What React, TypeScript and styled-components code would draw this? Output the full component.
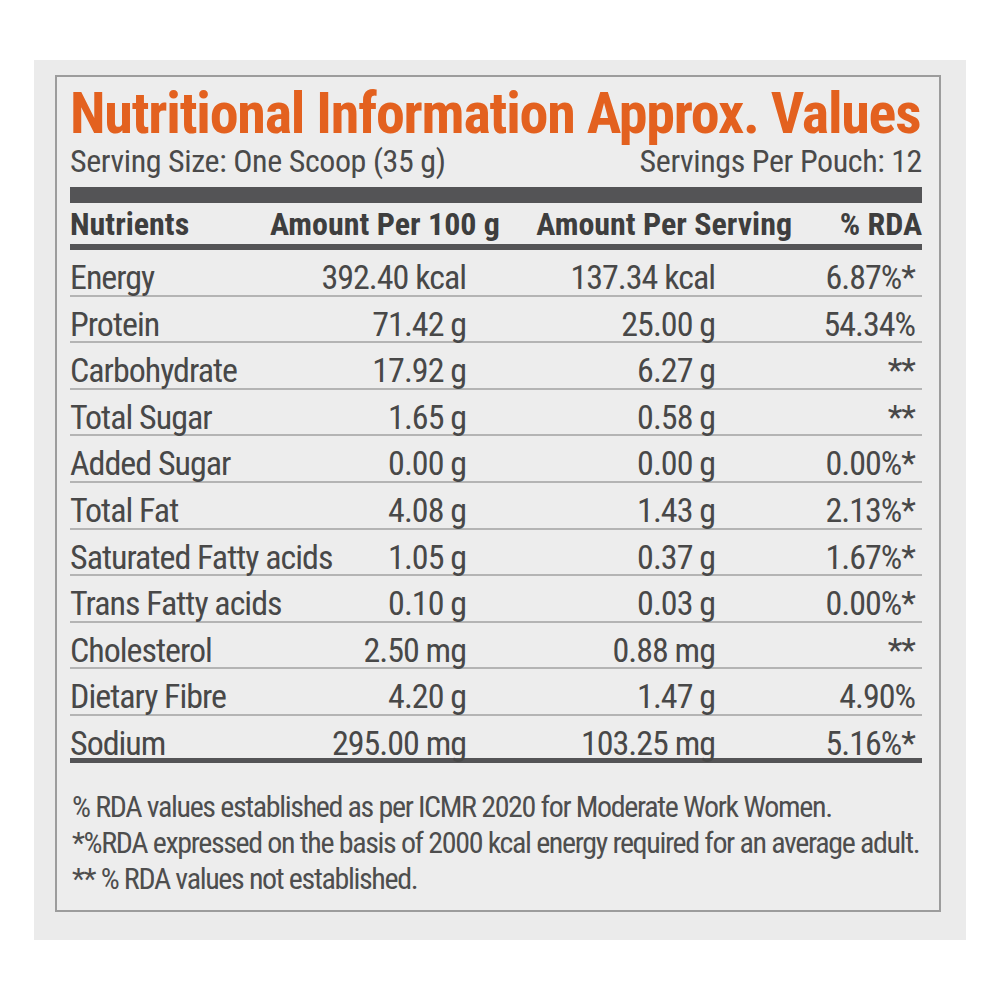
import React from "react";
import styled, { createGlobalStyle } from "styled-components";

const GlobalStyle = createGlobalStyle`
  html, body { margin: 0; padding: 0; background: #ffffff; }
  body { font-family: "Roboto Condensed", Roboto, "Liberation Sans", sans-serif; font-stretch: condensed; }
`;

const Page = styled.div`
  width: 1000px;
  height: 1000px;
  padding-top: 60px;
  padding-left: 34px;
  box-sizing: border-box;
`;

const Panel = styled.section`
  width: 932px;
  height: 880px;
  box-sizing: border-box;
  background: #ebebeb;
  padding: 15px 25px 28px 21px;
`;

const Frame = styled.div`
  height: 100%;
  box-sizing: border-box;
  border: 2px solid #9c9c9c;
  background: #ededed;
  padding: 7px 17px 0 13px;
  color: #454545;
`;

const Title = styled.h1`
  margin: 0;
  font-size: 58px;
  line-height: 58px;
  font-weight: 700;
  color: #e3611f;
  white-space: nowrap;
  letter-spacing: -1.2px;
`;

const Serving = styled.div`
  display: flex;
  justify-content: space-between;
  margin-top: 3px;
  font-size: 32px;
  line-height: 32px;
  color: #4a4a4a;
  white-space: nowrap;
  letter-spacing: -0.4px;
`;

const ThickBar = styled.div<{ h: number; gap: number }>`
  height: ${(p) => p.h}px;
  margin-top: ${(p) => p.gap}px;
  background: #545456;
`;

const HeadRow = styled.div`
  display: grid;
  grid-template-columns: 200px 228px 294px 130px;
  padding-top: 5px;
  padding-bottom: 4px;
  font-size: 32px;
  line-height: 32px;
  font-weight: 700;
  color: #3e3e3e;
  white-space: nowrap;
`;

const HeadCell = styled.div<{ right?: boolean }>`
  text-align: ${(p) => (p.right ? "right" : "left")};
`;

const Row = styled.div<{ last?: boolean }>`
  display: grid;
  grid-template-columns: 220px 176px 249px 200px;
  padding-right: 7px;
  padding-top: 10px;
  padding-bottom: ${(p) => (p.last ? "0" : "0.6px")};
  height: ${(p) => (p.last ? "42px" : "auto")};
  box-sizing: border-box;
  border-bottom: ${(p) => (p.last ? "none" : "2px solid #b4b4b4")};
  font-size: 34px;
  line-height: 34px;
  letter-spacing: -1px;
  color: #484848;
  white-space: nowrap;
`;

const Cell = styled.div<{ right?: boolean }>`
  text-align: ${(p) => (p.right ? "right" : "left")};
  overflow: visible;
`;

const Notes = styled.div`
  margin-top: 26px;
  padding-left: 2px;
  font-size: 30px;
  line-height: 36px;
  color: #4e4e4e;
  white-space: nowrap;
  letter-spacing: -1.35px;
`;

const Note = styled.div``;

const rows: [string, string, string, string][] = [
  ["Energy", "392.40 kcal", "137.34 kcal", "6.87%*"],
  ["Protein", "71.42 g", "25.00 g", "54.34%"],
  ["Carbohydrate", "17.92 g", "6.27 g", "**"],
  ["Total Sugar", "1.65 g", "0.58 g", "**"],
  ["Added Sugar", "0.00 g", "0.00 g", "0.00%*"],
  ["Total Fat", "4.08 g", "1.43 g", "2.13%*"],
  ["Saturated Fatty acids", "1.05 g", "0.37 g", "1.67%*"],
  ["Trans Fatty acids", "0.10 g", "0.03 g", "0.00%*"],
  ["Cholesterol", "2.50 mg", "0.88 mg", "**"],
  ["Dietary Fibre", "4.20 g", "1.47 g", "4.90%"],
  ["Sodium", "295.00 mg", "103.25 mg", "5.16%*"],
];

export default function App() {
  return (
    <>
      <GlobalStyle />
      <Page>
        <Panel>
          <Frame>
            <Title>Nutritional Information Approx. Values</Title>
            <Serving>
              <span>Serving Size: One Scoop (35 g)</span>
              <span>Servings Per Pouch: 12</span>
            </Serving>
            <ThickBar h={16} gap={10} />
            <HeadRow>
              <HeadCell>Nutrients</HeadCell>
              <HeadCell right>Amount Per 100 g</HeadCell>
              <HeadCell right>Amount Per Serving</HeadCell>
              <HeadCell right>% RDA</HeadCell>
            </HeadRow>
            <ThickBar h={6} gap={0} />
            {rows.map((r, i) => (
              <Row key={r[0]} last={i === rows.length - 1}>
                <Cell>{r[0]}</Cell>
                <Cell right>{r[1]}</Cell>
                <Cell right>{r[2]}</Cell>
                <Cell right>{r[3]}</Cell>
              </Row>
            ))}
            <ThickBar h={5} gap={0} />
            <Notes>
              <Note>% RDA values established as per ICMR 2020 for Moderate Work Women.</Note>
              <Note>*%RDA expressed on the basis of 2000 kcal energy required for an average adult.</Note>
              <Note>** % RDA values not established.</Note>
            </Notes>
          </Frame>
        </Panel>
      </Page>
    </>
  );
}
